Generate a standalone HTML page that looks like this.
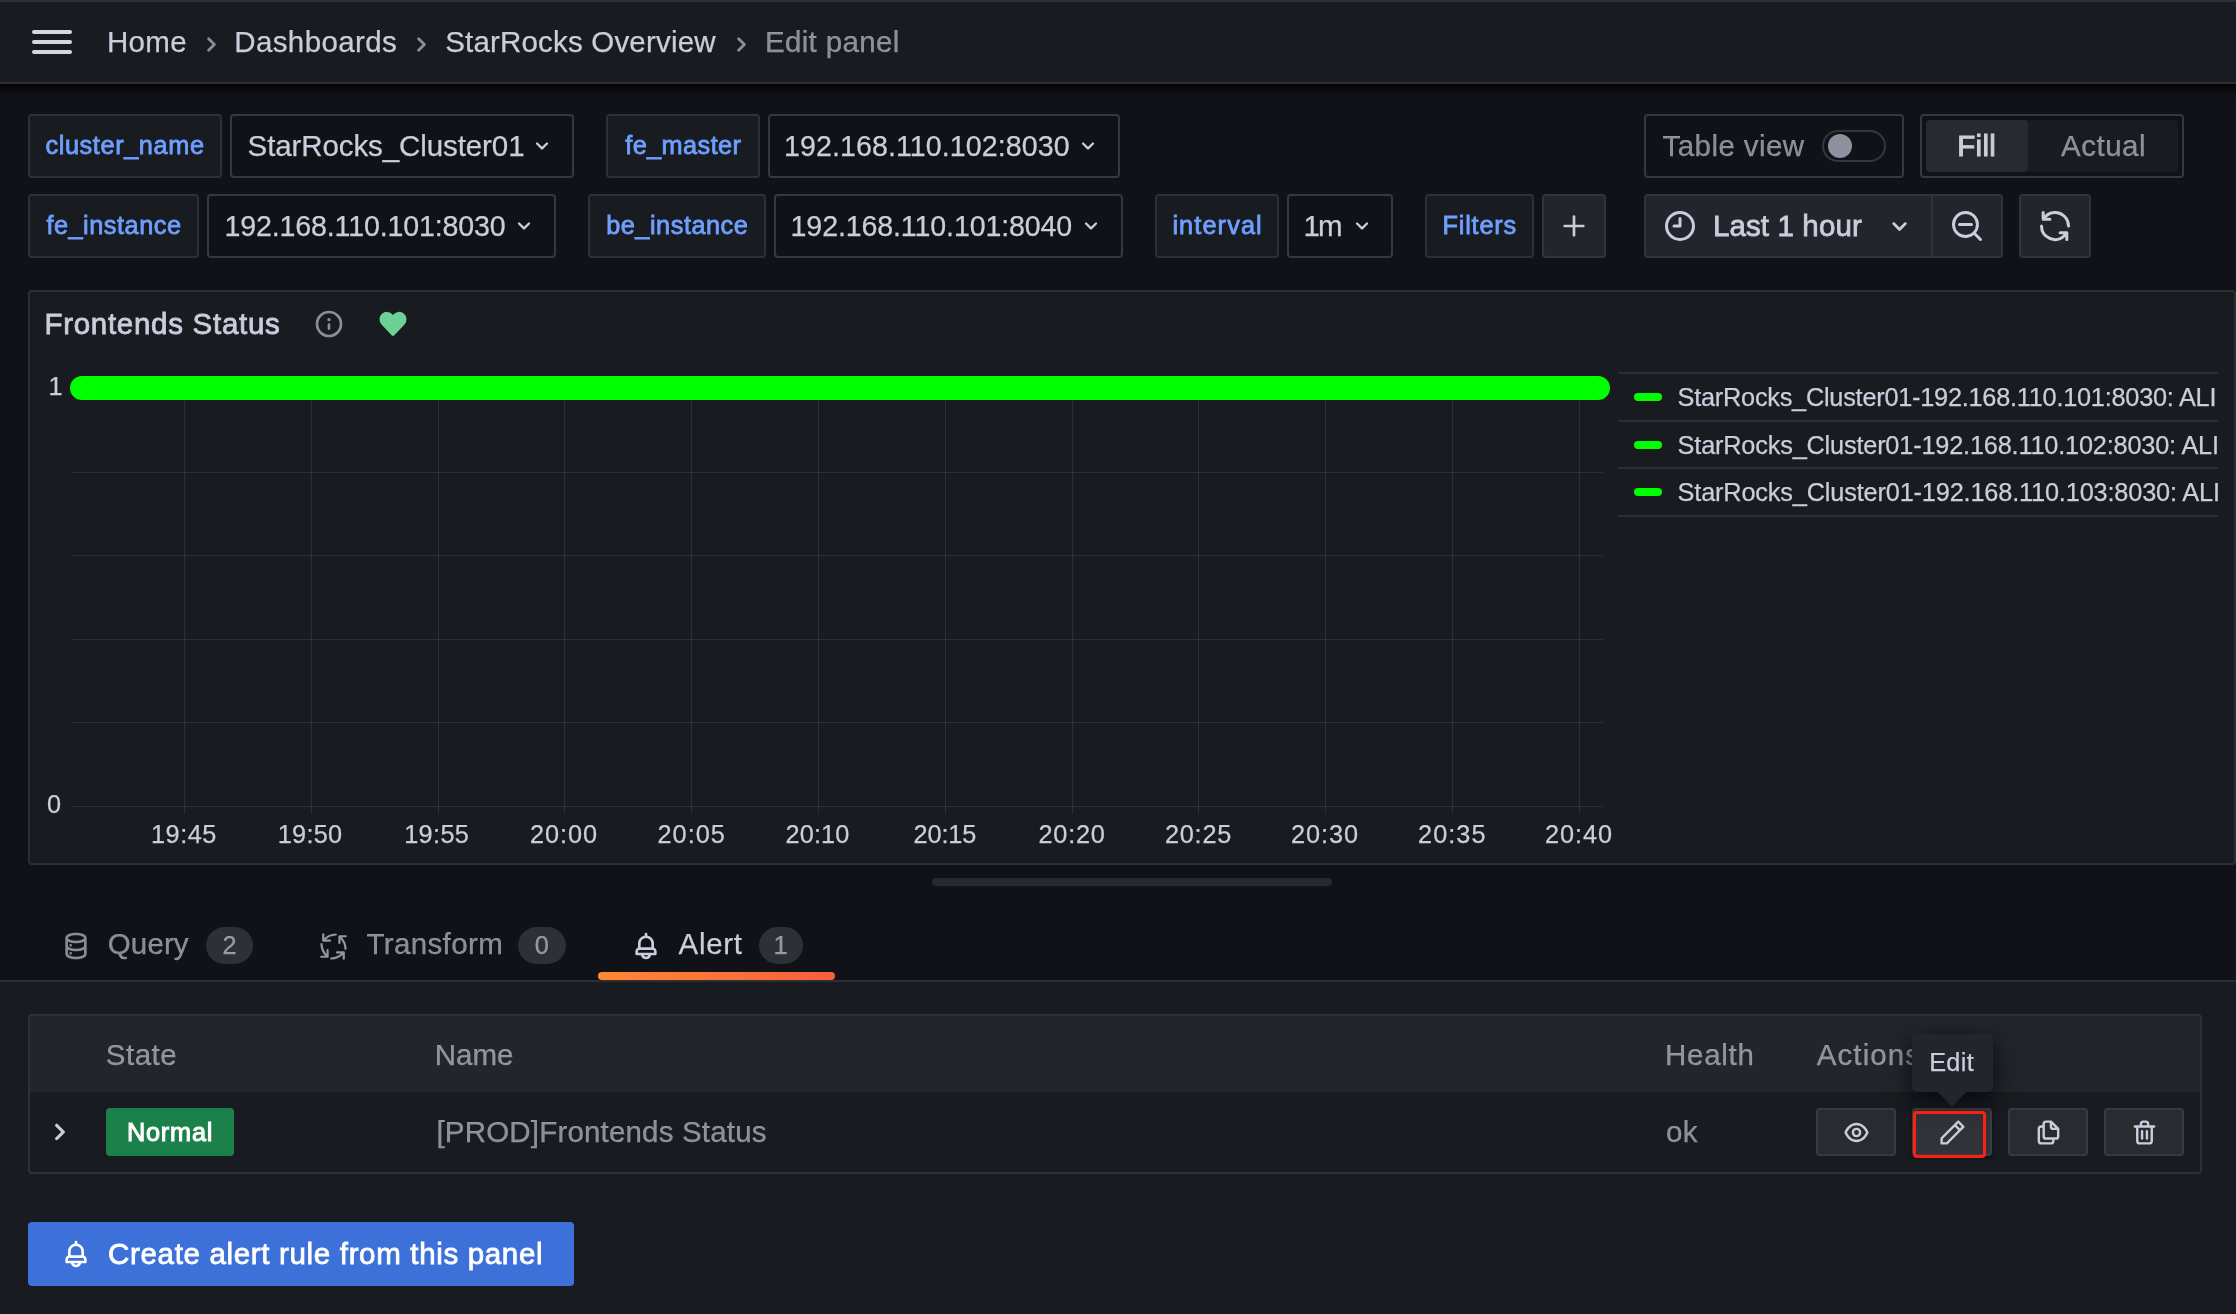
<!DOCTYPE html>
<html lang="en">
<head>
<meta charset="utf-8">
<title>Edit panel - StarRocks Overview - Dashboards - Grafana</title>
<style>
*{box-sizing:border-box;margin:0;padding:0}
html,body{width:2236px;height:1314px;overflow:hidden;background:#111217}
body{position:relative;font-family:"Liberation Sans",sans-serif;color:#ccccdc;-webkit-font-smoothing:antialiased}
#app{position:absolute;left:0;top:0;width:2236px;height:1314px;will-change:transform}
.a{position:absolute}
.t{position:absolute;white-space:pre;display:block}
svg{position:absolute;overflow:visible}
.ic{fill:#ccccdc}
.icw{fill:#fff}
.ic2{fill:rgba(204,204,220,0.65)}
.lbl{position:absolute;height:64px;background:#181b1f;border:2px solid #2e3036;border-radius:4px}
.val{position:absolute;height:64px;background:#111217;border:2px solid #36373f;border-radius:4px}
.btn{position:absolute;background:#2a2b31;border:2px solid #383a41;border-radius:4px}
.bdg{position:absolute;top:927px;height:37px;border-radius:19px;background:#2e3037}
.tb{position:absolute;background:#22252b;border:2px solid #32343b;border-radius:4px}
</style>
</head>
<body>
<div id="app">

<!-- ===== top bar ===== -->
<header>
  <div class="a" style="left:0;top:0;width:2236px;height:84px;background:#181b1f;border-top:2px solid #2d2f36;border-bottom:2px solid #2c2e34"></div>
  <div class="a" style="left:0;top:84px;width:2236px;height:16px;background:linear-gradient(#000 0,#060608 2px,#0b0b0f 5px,#0f1014 10px,#111217 16px)"></div>
  <button class="a" aria-label="Toggle menu" style="left:32px;top:30px;width:40px;height:24px;background:none;border:0">
    <i class="a" style="left:0;top:0;width:40px;height:4px;border-radius:2px;background:#d5d5e3"></i>
    <i class="a" style="left:0;top:10px;width:40px;height:4px;border-radius:2px;background:#d5d5e3"></i>
    <i class="a" style="left:0;top:20px;width:40px;height:4px;border-radius:2px;background:#d5d5e3"></i>
  </button>
  <nav aria-label="Breadcrumbs">
    <span class="t" style="left:107.0px;top:24.4px;font-size:29.5px;line-height:35px;letter-spacing:0.289px;color:#ccccdc;-webkit-text-stroke:0.25px #ccccdc">Home</span>
    <svg style="left:194.7px;top:27.5px" width="33" height="33" viewBox="0 0 24 24"><path class="ic2" d="M14.83,11.29,10.59,7.05a1,1,0,0,0-1.42,0,1,1,0,0,0,0,1.41L12.71,12,9.17,15.54a1,1,0,0,0,0,1.41,1,1,0,0,0,.71.29,1,1,0,0,0,.71-.29l4.24-4.24A1,1,0,0,0,14.83,11.29Z"/></svg>
    <span class="t" style="left:234.2px;top:24.4px;font-size:29.5px;line-height:35px;letter-spacing:0.393px;color:#ccccdc;-webkit-text-stroke:0.25px #ccccdc">Dashboards</span>
    <svg style="left:404.6px;top:27.5px" width="33" height="33" viewBox="0 0 24 24"><path class="ic2" d="M14.83,11.29,10.59,7.05a1,1,0,0,0-1.42,0,1,1,0,0,0,0,1.41L12.71,12,9.17,15.54a1,1,0,0,0,0,1.41,1,1,0,0,0,.71.29,1,1,0,0,0,.71-.29l4.24-4.24A1,1,0,0,0,14.83,11.29Z"/></svg>
    <span class="t" style="left:445.2px;top:24.4px;font-size:29.5px;line-height:35px;letter-spacing:0.186px;color:#ccccdc;-webkit-text-stroke:0.25px #ccccdc">StarRocks Overview</span>
    <svg style="left:725.3px;top:27.5px" width="33" height="33" viewBox="0 0 24 24"><path class="ic2" d="M14.83,11.29,10.59,7.05a1,1,0,0,0-1.42,0,1,1,0,0,0,0,1.41L12.71,12,9.17,15.54a1,1,0,0,0,0,1.41,1,1,0,0,0,.71.29,1,1,0,0,0,.71-.29l4.24-4.24A1,1,0,0,0,14.83,11.29Z"/></svg>
    <span class="t" style="left:764.9px;top:24.4px;font-size:29.5px;line-height:35px;letter-spacing:0.355px;color:rgba(204,204,220,0.65);-webkit-text-stroke:0.25px rgba(204,204,220,0.65)">Edit panel</span>
  </nav>
</header>

<!-- ===== template variables + toolbar ===== -->
<section aria-label="Dashboard submenu">
<label class="lbl" style="left:28px;top:114px;width:194px"></label><span class="t" style="left:45.4px;top:129.8px;font-size:25.3px;line-height:30px;letter-spacing:0.610px;color:#6e9fff;-webkit-text-stroke:0.8px #6e9fff">cluster_name</span>
<div class="val" style="left:230px;top:114px;width:344px"></div><span class="t" style="left:247.6px;top:128.3px;font-size:29.5px;line-height:35px;letter-spacing:-0.098px;color:#ccccdc;-webkit-text-stroke:0.25px #ccccdc">StarRocks_Cluster01</span><svg style="left:528.0px;top:132.3px" width="28" height="28" viewBox="0 0 24 24"><path class="ic" d="M17,9.17a1,1,0,0,0-1.41,0L12,12.71,8.46,9.17a1,1,0,0,0-1.41,0,1,1,0,0,0,0,1.42l4.24,4.24a1,1,0,0,0,1.42,0L17,10.59A1,1,0,0,0,17,9.17Z"/></svg>
<label class="lbl" style="left:606px;top:114px;width:154px"></label><span class="t" style="left:625.2px;top:129.8px;font-size:25.3px;line-height:30px;letter-spacing:0.418px;color:#6e9fff;-webkit-text-stroke:0.8px #6e9fff">fe_master</span>
<div class="val" style="left:768px;top:114px;width:352px"></div><span class="t" style="left:784.1px;top:129.1px;font-size:28.6px;line-height:34px;letter-spacing:0.077px;color:#ccccdc;-webkit-text-stroke:0.25px #ccccdc">192.168.110.102:8030</span><svg style="left:1073.9px;top:132.3px" width="28" height="28" viewBox="0 0 24 24"><path class="ic" d="M17,9.17a1,1,0,0,0-1.41,0L12,12.71,8.46,9.17a1,1,0,0,0-1.41,0,1,1,0,0,0,0,1.42l4.24,4.24a1,1,0,0,0,1.42,0L17,10.59A1,1,0,0,0,17,9.17Z"/></svg>
<label class="lbl" style="left:28px;top:194px;width:171px"></label><span class="t" style="left:46.4px;top:209.8px;font-size:25.3px;line-height:30px;letter-spacing:0.518px;color:#6e9fff;-webkit-text-stroke:0.8px #6e9fff">fe_instance</span>
<div class="val" style="left:207px;top:194px;width:349px"></div><span class="t" style="left:224.5px;top:209.1px;font-size:28.6px;line-height:34px;letter-spacing:-0.150px;color:#ccccdc;-webkit-text-stroke:0.25px #ccccdc">192.168.110.101:8030</span><svg style="left:509.7px;top:212.3px" width="28" height="28" viewBox="0 0 24 24"><path class="ic" d="M17,9.17a1,1,0,0,0-1.41,0L12,12.71,8.46,9.17a1,1,0,0,0-1.41,0,1,1,0,0,0,0,1.42l4.24,4.24a1,1,0,0,0,1.42,0L17,10.59A1,1,0,0,0,17,9.17Z"/></svg>
<label class="lbl" style="left:588px;top:194px;width:178px"></label><span class="t" style="left:606.2px;top:209.8px;font-size:25.3px;line-height:30px;letter-spacing:0.524px;color:#6e9fff;-webkit-text-stroke:0.8px #6e9fff">be_instance</span>
<div class="val" style="left:774px;top:194px;width:349px"></div><span class="t" style="left:790.6px;top:209.1px;font-size:28.6px;line-height:34px;letter-spacing:-0.129px;color:#ccccdc;-webkit-text-stroke:0.25px #ccccdc">192.168.110.101:8040</span><svg style="left:1076.9px;top:212.3px" width="28" height="28" viewBox="0 0 24 24"><path class="ic" d="M17,9.17a1,1,0,0,0-1.41,0L12,12.71,8.46,9.17a1,1,0,0,0-1.41,0,1,1,0,0,0,0,1.42l4.24,4.24a1,1,0,0,0,1.42,0L17,10.59A1,1,0,0,0,17,9.17Z"/></svg>
<label class="lbl" style="left:1155px;top:194px;width:124px"></label><span class="t" style="left:1172.4px;top:209.8px;font-size:25.3px;line-height:30px;letter-spacing:1.110px;color:#6e9fff;-webkit-text-stroke:0.8px #6e9fff">interval</span>
<div class="val" style="left:1287px;top:194px;width:106px"></div><span class="t" style="left:1303.6px;top:208.3px;font-size:29.5px;line-height:35px;letter-spacing:-2.056px;color:#ccccdc;-webkit-text-stroke:0.25px #ccccdc">1m</span><svg style="left:1347.5px;top:212.3px" width="28" height="28" viewBox="0 0 24 24"><path class="ic" d="M17,9.17a1,1,0,0,0-1.41,0L12,12.71,8.46,9.17a1,1,0,0,0-1.41,0,1,1,0,0,0,0,1.42l4.24,4.24a1,1,0,0,0,1.42,0L17,10.59A1,1,0,0,0,17,9.17Z"/></svg>
<label class="lbl" style="left:1425px;top:194px;width:109px"></label><span class="t" style="left:1442.4px;top:209.8px;font-size:25.3px;line-height:30px;letter-spacing:0.831px;color:#6e9fff;-webkit-text-stroke:0.8px #6e9fff">Filters</span>
</section>
<!-- ===== toolbar ===== -->
<section aria-label="Panel editor toolbar">
<button class="tb" aria-label="Add filter" style="left:1542px;top:194px;width:64px;height:64px"></button><svg style="left:1558.0px;top:210.0px" width="32" height="32" viewBox="0 0 24 24"><path class="ic" d="M19,11H13V5a1,1,0,0,0-2,0v6H5a1,1,0,0,0,0,2h6v6a1,1,0,0,0,2,0V13h6a1,1,0,0,0,0-2Z"/></svg>
<div class="val" style="left:1644px;top:114px;width:260px"></div><span class="t" style="left:1662.6px;top:128.3px;font-size:29.5px;line-height:35px;letter-spacing:0.424px;color:rgba(204,204,220,0.65);-webkit-text-stroke:0.25px rgba(204,204,220,0.65)">Table view</span>
<div class="a" role="switch" style="left:1822px;top:130px;width:64px;height:32px;border-radius:16px;border:2px solid #36373e;background:#111217"><i class="a" style="left:3.8px;top:1.8px;width:24.4px;height:24.4px;border-radius:50%;background:#8f8f9d"></i></div>
<div class="val" role="radiogroup" style="left:1920px;top:114px;width:264px"></div>
<div class="a" style="left:2027px;top:120px;width:151px;height:52px;border-radius:0 4px 4px 0;background:#191b20"></div>
<div class="a" style="left:1926px;top:120px;width:102px;height:52px;border-radius:4px;background:#292a30"></div>
<span class="t" style="left:1957.3px;top:128.4px;font-size:29.5px;line-height:35px;letter-spacing:0.291px;color:#ccccdc;-webkit-text-stroke:1.0px #ccccdc">Fill</span><span class="t" style="left:2061.0px;top:128.4px;font-size:29.5px;line-height:35px;letter-spacing:0.523px;color:rgba(204,204,220,0.65);-webkit-text-stroke:0.25px rgba(204,204,220,0.65)">Actual</span>
<div class="tb" style="left:1644px;top:194px;width:359px;height:64px"></div><i class="a" style="left:1931px;top:196px;width:2px;height:60px;background:#32343b"></i>
<svg style="left:1662.0px;top:208.0px" width="36" height="36" viewBox="0 0 24 24"><path class="ic" d="M12,2A10,10,0,1,0,22,12,10.01114,10.01114,0,0,0,12,2Zm0,18a8,8,0,1,1,8-8A8.00917,8.00917,0,0,1,12,20ZM12,6a.99974.99974,0,0,0-1,1v4H8a1,1,0,0,0,0,2h4a.99974.99974,0,0,0,1-1V7A.99974.99974,0,0,0,12,6Z"/></svg>
<span class="t" style="left:1712.9px;top:208.3px;font-size:29.5px;line-height:35px;letter-spacing:0.132px;color:#ccccdc;-webkit-text-stroke:0.8px #ccccdc">Last 1 hour</span>
<svg style="left:1882.7px;top:210.0px" width="33" height="33" viewBox="0 0 24 24"><path class="ic" d="M17,9.17a1,1,0,0,0-1.41,0L12,12.71,8.46,9.17a1,1,0,0,0-1.41,0,1,1,0,0,0,0,1.42l4.24,4.24a1,1,0,0,0,1.42,0L17,10.59A1,1,0,0,0,17,9.17Z"/></svg>
<svg style="left:1949.0px;top:208.0px" width="36" height="36" viewBox="0 0 24 24"><path class="ic" d="M21.71,20.29,18,16.61A9,9,0,1,0,16.61,18l3.68,3.68a1,1,0,0,0,1.42,0A1,1,0,0,0,21.71,20.29ZM11,18a7,7,0,1,1,7-7A7,7,0,0,1,11,18Zm4-8H7a1,1,0,0,0,0,2h8a1,1,0,0,0,0-2Z"/></svg>
<button class="tb" aria-label="Refresh" style="left:2019px;top:194px;width:72px;height:64px"></button><svg style="left:2037.0px;top:208.0px" width="36" height="36" viewBox="0 0 24 24"><path class="ic" d="M19.91,15.51H15.38a1,1,0,0,0,0,2h2.4A8,8,0,0,1,4,12a1,1,0,0,0-2,0,10,10,0,0,0,16.88,7.23V21a1,1,0,0,0,2,0V16.5A1,1,0,0,0,19.91,15.51ZM12,2A10,10,0,0,0,5.12,4.77V3a1,1,0,0,0-2,0V7.5a1,1,0,0,0,1,1h4.5a1,1,0,0,0,0-2H6.22A8,8,0,0,1,20,12a1,1,0,0,0,2,0A10,10,0,0,0,12,2Z"/></svg>
</section>

<!-- ===== panel preview ===== -->
<section aria-label="Frontends Status panel">
<div class="a" style="left:28px;top:290px;width:2208px;height:575px;background:#181b1f;border:2px solid #2c2e34;border-radius:4px"></div>
<span class="t" style="left:44.4px;top:306.3px;font-size:29.5px;line-height:35px;letter-spacing:0.720px;color:#ccccdc;-webkit-text-stroke:0.8px #ccccdc">Frontends Status</span>
<svg style="left:313.1px;top:308.2px" width="32" height="32" viewBox="0 0 24 24"><path class="ic2" d="M12,2A10,10,0,1,0,22,12,10.01114,10.01114,0,0,0,12,2Zm0,18a8,8,0,1,1,8-8A8.00917,8.00917,0,0,1,12,20Zm0-8.5a1,1,0,0,0-1,1v3a1,1,0,0,0,2,0v-3A1,1,0,0,0,12,11.5Zm0-4a1.25,1.25,0,1,0,1.25,1.25A1.25,1.25,0,0,0,12,7.5Z"/></svg>
<svg style="left:377px;top:308px" width="32" height="32" viewBox="0 0 24 24"><path fill="#6dd094" d="M10.98,20.50 L3.35,12.32 A5.6,5.6 0 1 1 12,5.24 A5.6,5.6 0 1 1 20.65,12.32 L13.02,20.50 Q12,21.6 10.98,20.50 Z"/></svg>
<svg style="left:0;top:0" width="2236" height="1314" shape-rendering="crispEdges"><g stroke="rgba(240,250,255,0.09)" stroke-width="1"><line x1="184.5" y1="388" x2="184.5" y2="814"/><line x1="311.5" y1="388" x2="311.5" y2="814"/><line x1="438.5" y1="388" x2="438.5" y2="814"/><line x1="564.5" y1="388" x2="564.5" y2="814"/><line x1="691.5" y1="388" x2="691.5" y2="814"/><line x1="818.5" y1="388" x2="818.5" y2="814"/><line x1="945.5" y1="388" x2="945.5" y2="814"/><line x1="1072.5" y1="388" x2="1072.5" y2="814"/><line x1="1198.5" y1="388" x2="1198.5" y2="814"/><line x1="1325.5" y1="388" x2="1325.5" y2="814"/><line x1="1452.5" y1="388" x2="1452.5" y2="814"/><line x1="1579.5" y1="388" x2="1579.5" y2="814"/><line x1="72" y1="388.5" x2="1603" y2="388.5"/><line x1="72" y1="472.5" x2="1603" y2="472.5"/><line x1="72" y1="555.5" x2="1603" y2="555.5"/><line x1="72" y1="639.5" x2="1603" y2="639.5"/><line x1="72" y1="722.5" x2="1603" y2="722.5"/><line x1="72" y1="806.5" x2="1603" y2="806.5"/></g><line x1="82" y1="388" x2="1598" y2="388" stroke="#00ff00" stroke-width="24" stroke-linecap="round" shape-rendering="auto"/></svg>
<span class="t" style="left:48.6px;top:371.2px;font-size:25.3px;line-height:30px;letter-spacing:0.000px;color:#ccccdc;-webkit-text-stroke:0.25px #ccccdc">1</span><span class="t" style="left:47.1px;top:788.9px;font-size:25.3px;line-height:30px;letter-spacing:0.000px;color:#ccccdc;-webkit-text-stroke:0.25px #ccccdc">0</span>
<span class="t" style="left:151.0px;top:819.2px;font-size:25.3px;line-height:30px;letter-spacing:0.529px;color:#ccccdc;-webkit-text-stroke:0.25px #ccccdc">19:45</span>
<span class="t" style="left:277.8px;top:819.2px;font-size:25.3px;line-height:30px;letter-spacing:0.254px;color:#ccccdc;-webkit-text-stroke:0.25px #ccccdc">19:50</span>
<span class="t" style="left:404.2px;top:819.2px;font-size:25.3px;line-height:30px;letter-spacing:0.354px;color:#ccccdc;-webkit-text-stroke:0.25px #ccccdc">19:55</span>
<span class="t" style="left:530.0px;top:819.2px;font-size:25.3px;line-height:30px;letter-spacing:0.954px;color:#ccccdc;-webkit-text-stroke:0.25px #ccccdc">20:00</span>
<span class="t" style="left:657.5px;top:819.2px;font-size:25.3px;line-height:30px;letter-spacing:1.029px;color:#ccccdc;-webkit-text-stroke:0.25px #ccccdc">20:05</span>
<span class="t" style="left:785.6px;top:819.2px;font-size:25.3px;line-height:30px;letter-spacing:0.104px;color:#ccccdc;-webkit-text-stroke:0.25px #ccccdc">20:10</span>
<span class="t" style="left:913.4px;top:819.2px;font-size:25.3px;line-height:30px;letter-spacing:-0.071px;color:#ccccdc;-webkit-text-stroke:0.25px #ccccdc">20:15</span>
<span class="t" style="left:1038.5px;top:819.2px;font-size:25.3px;line-height:30px;letter-spacing:0.779px;color:#ccccdc;-webkit-text-stroke:0.25px #ccccdc">20:20</span>
<span class="t" style="left:1164.9px;top:819.2px;font-size:25.3px;line-height:30px;letter-spacing:0.779px;color:#ccccdc;-webkit-text-stroke:0.25px #ccccdc">20:25</span>
<span class="t" style="left:1291.0px;top:819.2px;font-size:25.3px;line-height:30px;letter-spacing:0.954px;color:#ccccdc;-webkit-text-stroke:0.25px #ccccdc">20:30</span>
<span class="t" style="left:1418.1px;top:819.2px;font-size:25.3px;line-height:30px;letter-spacing:1.029px;color:#ccccdc;-webkit-text-stroke:0.25px #ccccdc">20:35</span>
<span class="t" style="left:1544.9px;top:819.2px;font-size:25.3px;line-height:30px;letter-spacing:0.954px;color:#ccccdc;-webkit-text-stroke:0.25px #ccccdc">20:40</span>
<i class="a" style="left:1618px;top:372px;width:600px;height:2px;background:#2c2e34"></i>
<i class="a" style="left:1618px;top:420px;width:600px;height:2px;background:#2c2e34"></i>
<i class="a" style="left:1618px;top:467px;width:600px;height:2px;background:#2c2e34"></i>
<i class="a" style="left:1618px;top:515px;width:600px;height:2px;background:#2c2e34"></i>
<i class="a" style="left:1634px;top:393px;width:28px;height:8px;border-radius:4px;background:#00ff00"></i>
<i class="a" style="left:1634px;top:441px;width:28px;height:8px;border-radius:4px;background:#00ff00"></i>
<i class="a" style="left:1634px;top:488px;width:28px;height:8px;border-radius:4px;background:#00ff00"></i>
<span class="t" style="left:1677.6px;top:381.7px;font-size:25.3px;line-height:30px;letter-spacing:-0.239px;color:#ccccdc;-webkit-text-stroke:0.25px #ccccdc;width:540.4px;overflow:hidden">StarRocks_Cluster01-192.168.110.101:8030: ALI</span>
<span class="t" style="left:1677.6px;top:429.7px;font-size:25.3px;line-height:30px;letter-spacing:-0.182px;color:#ccccdc;-webkit-text-stroke:0.25px #ccccdc;width:540.4px;overflow:hidden">StarRocks_Cluster01-192.168.110.102:8030: ALI</span>
<span class="t" style="left:1677.6px;top:476.7px;font-size:25.3px;line-height:30px;letter-spacing:-0.160px;color:#ccccdc;-webkit-text-stroke:0.25px #ccccdc;width:540.4px;overflow:hidden">StarRocks_Cluster01-192.168.110.103:8030: ALI</span>
</section>
<div class="a" aria-hidden="true" style="left:932px;top:878px;width:400px;height:8px;border-radius:4px;background:#27292e"></div>

<!-- ===== editor tabs ===== -->
<nav aria-label="Panel editor tabs" role="tablist">
<div class="a" style="left:0;top:982px;width:2236px;height:332px;background:#181b1f"></div>
<div class="a" style="left:0;top:980px;width:2236px;height:2px;background:#2c2e34"></div>
<svg style="left:60.0px;top:930.0px" width="32" height="32" viewBox="0 0 24 24"><path class="ic2" d="M8,16.5a1,1,0,1,0,1,1A1,1,0,0,0,8,16.5ZM12,2C8,2,4,3.37,4,6V18c0,2.63,4,4,8,4s8-1.37,8-4V6C20,3.37,16,2,12,2Zm6,16c0,.71-2.28,2-6,2s-6-1.29-6-2V14.73A13.16,13.16,0,0,0,12,16a13.16,13.16,0,0,0,6-1.27Zm0-6c0,.71-2.28,2-6,2s-6-1.29-6-2V8.73A13.16,13.16,0,0,0,12,10a13.16,13.16,0,0,0,6-1.27ZM12,8C8.28,8,6,6.71,6,6s2.28-2,6-2,6,1.29,6,2S15.72,8,12,8ZM8,10.5a1,1,0,1,0,1,1A1,1,0,0,0,8,10.5Z"/></svg>
<span class="t" style="left:107.8px;top:926.3px;font-size:29.5px;line-height:35px;letter-spacing:0.117px;color:rgba(204,204,220,0.65);-webkit-text-stroke:0.25px rgba(204,204,220,0.65)">Query</span>
<span class="bdg" style="left:206px;width:47px"></span><span class="t" style="left:222.6px;top:930.2px;font-size:25.3px;line-height:30px;letter-spacing:0.000px;color:rgba(204,204,220,0.65);-webkit-text-stroke:0.25px rgba(204,204,220,0.65)">2</span>
<svg style="left:317.9px;top:930.5px" width="31" height="31" viewBox="0 0 24 24"><g stroke="#9595a3" stroke-width="1.7" stroke-linecap="round" stroke-linejoin="round"><path fill="none" d="M13.8,2.7Q8.2,3 5,6.6"/><path fill="none" d="M4.05,2.5V7.4H9.3"/><path fill="#9595a3" stroke="none" d="M4.05,4.4V7.4H7.2Z"/></g><g transform="rotate(90 12 12)" stroke="#9595a3" stroke-width="1.7" stroke-linecap="round" stroke-linejoin="round"><path fill="none" d="M13.8,2.7Q8.2,3 5,6.6"/><path fill="none" d="M4.05,2.5V7.4H9.3"/><path fill="#9595a3" stroke="none" d="M4.05,4.4V7.4H7.2Z"/></g><g transform="rotate(180 12 12)" stroke="#9595a3" stroke-width="1.7" stroke-linecap="round" stroke-linejoin="round"><path fill="none" d="M13.8,2.7Q8.2,3 5,6.6"/><path fill="none" d="M4.05,2.5V7.4H9.3"/><path fill="#9595a3" stroke="none" d="M4.05,4.4V7.4H7.2Z"/></g><g transform="rotate(270 12 12)" stroke="#9595a3" stroke-width="1.7" stroke-linecap="round" stroke-linejoin="round"><path fill="none" d="M13.8,2.7Q8.2,3 5,6.6"/><path fill="none" d="M4.05,2.5V7.4H9.3"/><path fill="#9595a3" stroke="none" d="M4.05,4.4V7.4H7.2Z"/></g></svg>
<span class="t" style="left:366.4px;top:926.3px;font-size:29.5px;line-height:35px;letter-spacing:0.376px;color:rgba(204,204,220,0.65);-webkit-text-stroke:0.25px rgba(204,204,220,0.65)">Transform</span>
<span class="bdg" style="left:518px;width:48px"></span><span class="t" style="left:534.8px;top:930.2px;font-size:25.3px;line-height:30px;letter-spacing:0.000px;color:rgba(204,204,220,0.65);-webkit-text-stroke:0.25px rgba(204,204,220,0.65)">0</span>
<svg style="left:629.8px;top:930.0px" width="32" height="32" viewBox="0 0 24 24"><path class="ic" d="M18,13.18V10a6,6,0,0,0-5-5.91V3a1,1,0,0,0-2,0V4.09A6,6,0,0,0,6,10v3.18A3,3,0,0,0,4,16v2a1,1,0,0,0,1,1H8.14a4,4,0,0,0,7.72,0H19a1,1,0,0,0,1-1V16A3,3,0,0,0,18,13.18ZM8,10a4,4,0,0,1,8,0v3H8Zm4,10a2,2,0,0,1-1.72-1h3.44A2,2,0,0,1,12,20Zm6-3H6V16a1,1,0,0,1,1-1H17a1,1,0,0,1,1,1Z"/></svg>
<span class="t" style="left:678.6px;top:926.3px;font-size:29.5px;line-height:35px;letter-spacing:0.697px;color:#ccccdc;-webkit-text-stroke:0.25px #ccccdc">Alert</span>
<span class="bdg" style="left:759px;width:44px"></span><span class="t" style="left:773.6px;top:930.2px;font-size:25.3px;line-height:30px;letter-spacing:0.000px;color:rgba(204,204,220,0.65);-webkit-text-stroke:0.25px rgba(204,204,220,0.65)">1</span>
<div class="a" style="left:598px;top:971.5px;width:237px;height:8px;border-radius:4px;background:linear-gradient(90deg,#ff8833,#f55f3e)"></div>
</nav>

<!-- ===== alert tab content ===== -->
<section aria-label="Alert rules">
<div class="a" role="table" style="left:28px;top:1014px;width:2174px;height:160px;border:2px solid #2e3036;border-radius:4px;background:#181b1f"><div class="a" role="row" style="left:0;top:0;width:2170px;height:76px;background:#22252b;border-radius:2px 2px 0 0"></div></div>
<span class="t" style="left:105.8px;top:1036.8px;font-size:29.5px;line-height:35px;letter-spacing:0.494px;color:rgba(204,204,220,0.65);-webkit-text-stroke:0.25px rgba(204,204,220,0.65)">State</span><span class="t" style="left:434.8px;top:1036.6px;font-size:29.5px;line-height:35px;letter-spacing:-0.011px;color:rgba(204,204,220,0.65);-webkit-text-stroke:0.25px rgba(204,204,220,0.65)">Name</span><span class="t" style="left:1665.0px;top:1036.6px;font-size:29.5px;line-height:35px;letter-spacing:0.737px;color:rgba(204,204,220,0.65);-webkit-text-stroke:0.25px rgba(204,204,220,0.65)">Health</span><span class="t" style="left:1816.7px;top:1036.6px;font-size:29.5px;line-height:35px;letter-spacing:1.110px;color:rgba(204,204,220,0.65);-webkit-text-stroke:0.25px rgba(204,204,220,0.65)">Actions</span>
<svg style="left:41.0px;top:1113.3px" width="38" height="38" viewBox="0 0 24 24"><path class="ic" d="M14.83,11.29,10.59,7.05a1,1,0,0,0-1.42,0,1,1,0,0,0,0,1.41L12.71,12,9.17,15.54a1,1,0,0,0,0,1.41,1,1,0,0,0,.71.29,1,1,0,0,0,.71-.29l4.24-4.24A1,1,0,0,0,14.83,11.29Z"/></svg>
<span class="a" style="left:106px;top:1108px;width:128px;height:48px;border-radius:4px;background:#1b8049"></span><span class="t" style="left:126.9px;top:1116.5px;font-size:25.3px;line-height:30px;letter-spacing:0.799px;color:#ffffff;-webkit-text-stroke:1.0px #ffffff">Normal</span>
<span class="t" style="left:436.5px;top:1114.1px;font-size:29.5px;line-height:35px;letter-spacing:0.178px;color:rgba(204,204,220,0.65);-webkit-text-stroke:0.25px rgba(204,204,220,0.65)">[PROD]Frontends Status</span>
<span class="t" style="left:1666.0px;top:1114.4px;font-size:29.5px;line-height:35px;letter-spacing:0.344px;color:rgba(204,204,220,0.65);-webkit-text-stroke:0.25px rgba(204,204,220,0.65)">ok</span>
<button class="btn" aria-label="View" style="left:1816px;top:1108px;width:80px;height:48px"></button><svg style="left:1841.5px;top:1117.5px" width="29" height="29" viewBox="0 0 24 24"><path class="ic" d="M21.92,11.6C19.9,6.91,16.1,4,12,4S4.1,6.91,2.08,11.6a1,1,0,0,0,0,.8C4.1,17.09,7.9,20,12,20s7.9-2.91,9.92-7.6A1,1,0,0,0,21.92,11.6ZM12,18c-3.17,0-6.17-2.29-7.9-6C5.83,8.29,8.83,6,12,6s6.17,2.29,7.9,6C18.17,15.71,15.17,18,12,18ZM12,8a4,4,0,1,0,4,4A4,4,0,0,0,12,8Zm0,6a2,2,0,1,1,2-2A2,2,0,0,1,12,14Z"/></svg>
<button class="btn" aria-label="Edit" style="left:1912px;top:1108px;width:80px;height:48px;background:#323339;border-color:#3c3e45;box-shadow:0 2px 4px rgba(0,0,0,.5)"></button><svg style="left:1937.5px;top:1117.5px" width="29" height="29" viewBox="0 0 24 24"><path class="ic" d="M22,7.24a1,1,0,0,0-.29-.71L17.47,2.29A1,1,0,0,0,16.76,2a1,1,0,0,0-.71.29L13.22,5.12h0L2.29,16.05a1,1,0,0,0-.29.71V21a1,1,0,0,0,1,1H7.24A1,1,0,0,0,8,21.71L18.87,10.78h0L21.71,8a1.19,1.19,0,0,0,.22-.33,1,1,0,0,0,0-.24.7.7,0,0,0,0-.14ZM6.83,20H4V17.17l9.93-9.93,2.83,2.83ZM18.17,8.66,15.34,5.83l1.42-1.41,2.82,2.82Z"/></svg>
<button class="btn" aria-label="Copy" style="left:2008px;top:1108px;width:80px;height:48px"></button><svg style="left:2033.5px;top:1117.5px" width="29" height="29" viewBox="0 0 24 24"><path class="ic" d="M21,8.94a1.31,1.31,0,0,0-.06-.27l0-.09a1.07,1.07,0,0,0-.19-.28h0l-6-6h0a1.07,1.07,0,0,0-.28-.19.32.32,0,0,0-.09,0A.88.88,0,0,0,14.05,2H10A3,3,0,0,0,7,5V6H6A3,3,0,0,0,3,9V19a3,3,0,0,0,3,3h8a3,3,0,0,0,3-3V18h1a3,3,0,0,0,3-3V9S21,9,21,8.94ZM15,5.41,17.59,8H16a1,1,0,0,1-1-1ZM15,19a1,1,0,0,1-1,1H6a1,1,0,0,1-1-1V9A1,1,0,0,1,6,8H7v7a3,3,0,0,0,3,3h5Zm4-4a1,1,0,0,1-1,1H10a1,1,0,0,1-1-1V5a1,1,0,0,1,1-1h3V7a3,3,0,0,0,3,3h3Z"/></svg>
<button class="btn" aria-label="Delete" style="left:2104px;top:1108px;width:80px;height:48px"></button><svg style="left:2129.5px;top:1117.5px" width="29" height="29" viewBox="0 0 24 24"><path class="ic" d="M10,18a1,1,0,0,0,1-1V11a1,1,0,0,0-2,0v6A1,1,0,0,0,10,18ZM20,6H16V5a3,3,0,0,0-3-3H11A3,3,0,0,0,8,5V6H4A1,1,0,0,0,4,8H5V19a3,3,0,0,0,3,3h8a3,3,0,0,0,3-3V8h1a1,1,0,0,0,0-2ZM10,5a1,1,0,0,1,1-1h2a1,1,0,0,1,1,1V6H10Zm7,14a1,1,0,0,1-1,1H8a1,1,0,0,1-1-1V8H17Zm-3-1a1,1,0,0,0,1-1V11a1,1,0,0,0-2,0v6A1,1,0,0,0,14,18Z"/></svg>
<div class="a" role="tooltip" style="left:1912px;top:1034px;width:81px;height:58px;border-radius:5px;background:#22252b;box-shadow:0 8px 24px rgba(1,4,9,.8)"></div>
<svg style="left:1935.3px;top:1091.5px" width="34" height="15" viewBox="0 0 34 15"><path fill="#22252b" d="M2.5,0H31.5L17,14.4Z"/></svg>
<span class="t" style="left:1929.2px;top:1047.0px;font-size:25.3px;line-height:30px;letter-spacing:0.296px;color:#ccccdc;-webkit-text-stroke:0.25px #ccccdc">Edit</span>
<div class="a" aria-hidden="true" style="left:1913px;top:1111px;width:73px;height:47px;border:3px solid #fa2014;border-radius:4px"></div>
<button class="a" style="left:28px;top:1222px;width:546px;height:64px;border:0;border-radius:4px;background:#3d71d9"></button>
<svg style="left:60.4px;top:1238.0px" width="32" height="32" viewBox="0 0 24 24"><path class="icw" d="M18,13.18V10a6,6,0,0,0-5-5.91V3a1,1,0,0,0-2,0V4.09A6,6,0,0,0,6,10v3.18A3,3,0,0,0,4,16v2a1,1,0,0,0,1,1H8.14a4,4,0,0,0,7.72,0H19a1,1,0,0,0,1-1V16A3,3,0,0,0,18,13.18ZM8,10a4,4,0,0,1,8,0v3H8Zm4,10a2,2,0,0,1-1.72-1h3.44A2,2,0,0,1,12,20Zm6-3H6V16a1,1,0,0,1,1-1H17a1,1,0,0,1,1,1Z"/></svg>
<span class="t" style="left:108.1px;top:1236.1px;font-size:29.5px;line-height:35px;letter-spacing:0.665px;color:#ffffff;-webkit-text-stroke:0.8px #ffffff">Create alert rule from this panel</span>
</section>

</div>
</body>
</html>
